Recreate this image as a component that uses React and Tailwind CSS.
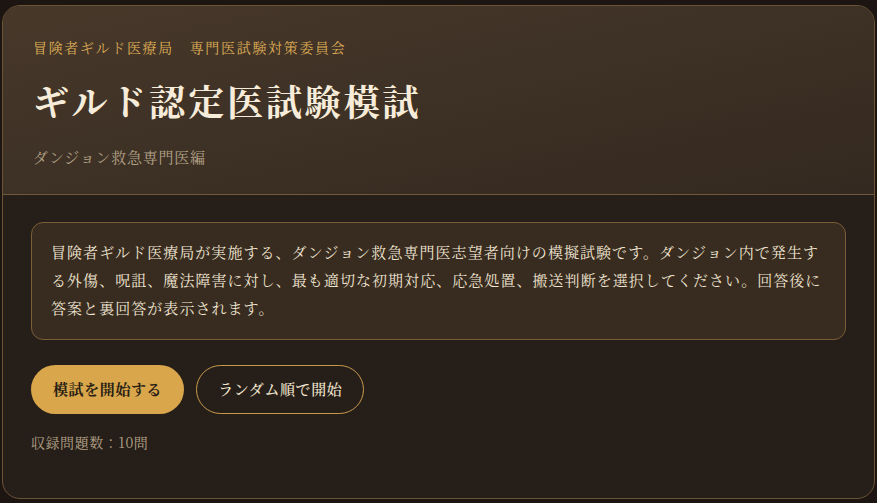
const serif = {
  fontFamily: '"Noto Serif CJK JP", "Liberation Serif", "Noto Sans CJK JP", serif',
}

export default function App() {
  return (
    <div className="min-h-[503px] bg-[#1c1512] px-[2px] pt-[5px] pb-[6px]" style={serif}>
      <div className="overflow-hidden rounded-[18px] border border-[#6a5434] bg-[#261e19]">
        {/* Header */}
        <div className="border-b border-[#6f5a3c] bg-gradient-to-br from-[#47382a] to-[#342920] px-[30px] pt-[31px] pb-[26px]">
          <p className="text-[14px] leading-[20px] tracking-[0.12em] text-[#dcab55]">
            冒険者ギルド医療局　専門医試験対策委員会
          </p>
          <h1 className="mt-[20px] text-[36px] font-bold leading-[47px] tracking-[0.08em] text-[#f6ecd9]">
            ギルド認定医試験模試
          </h1>
          <p className="mt-[22px] text-[15px] leading-[22px] tracking-[0.05em] text-[#b2a287]">
            ダンジョン救急専門医編
          </p>
        </div>

        {/* Body */}
        <div className="px-[28px] pt-[27px] pb-[46px]">
          <div className="rounded-[12px] border border-[#7a5f36] bg-[#382b20] px-[19px] pt-[15px] pb-[17px]">
            <p className="text-[15px] leading-[28px] tracking-[0.07em] text-[#efe5d0]">
              冒険者ギルド医療局が実施する、ダンジョン救急専門医志望者向けの模擬試験です。ダンジョン内で発生する外傷、呪詛、魔法障害に対し、最も適切な初期対応、応急処置、搬送判断を選択してください。回答後に答案と裏回答が表示されます。
            </p>
          </div>

          <div className="mt-[25px] flex items-center gap-3">
            <button className="h-[49px] rounded-full bg-[#d9a64b] px-[22px] text-[15px] font-bold tracking-[0.04em] text-[#2a1f14]">
              模試を開始する
            </button>
            <button className="h-[49px] rounded-full border border-[#c99a4c] px-[21px] text-[15px] font-medium tracking-[0.04em] text-[#f1e6cf]">
              ランダム順で開始
            </button>
          </div>

          <p className="mt-[18px] text-[14px] leading-[20px] tracking-[0.04em] text-[#b2a287]">収録問題数：10問</p>
        </div>
      </div>
    </div>
  )
}
